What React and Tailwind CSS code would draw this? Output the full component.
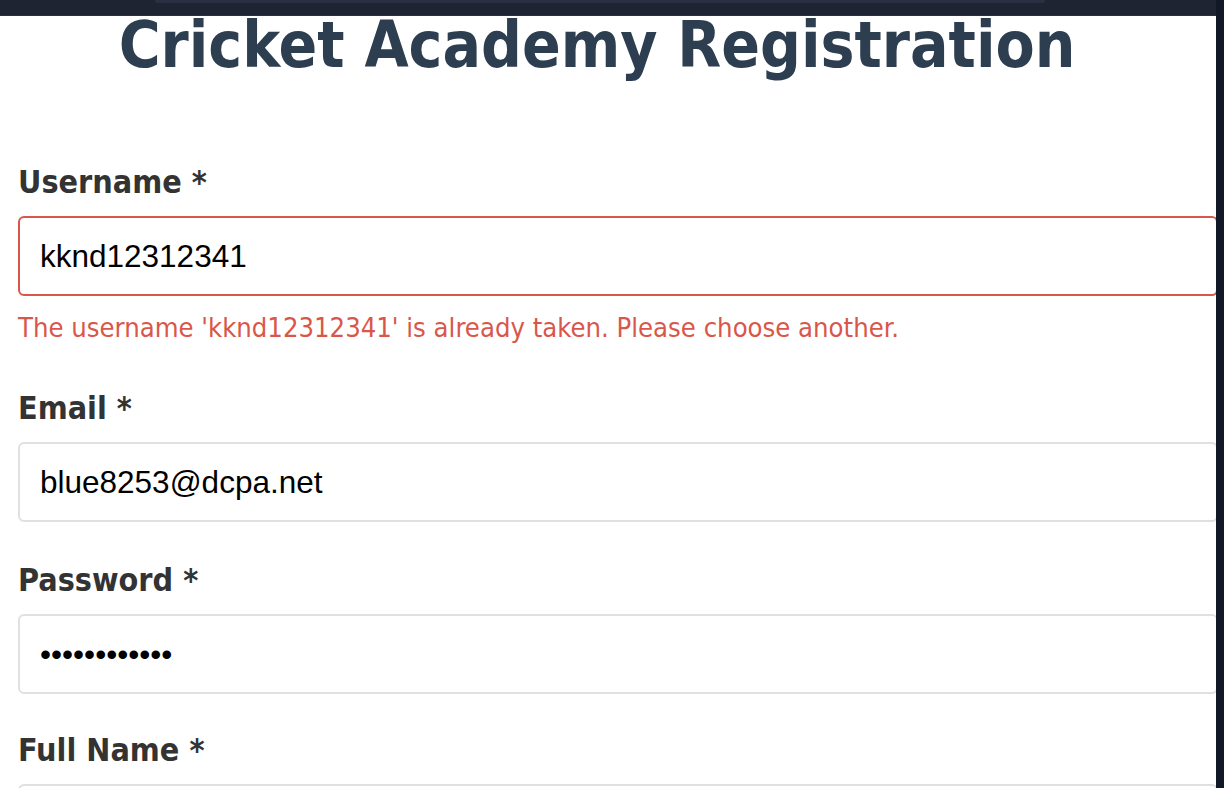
export default function App() {
  const tahoma = { fontFamily: '"DejaVu Sans Condensed", "DejaVu Sans", sans-serif' };
  const arial = { fontFamily: '"Liberation Sans", Arial, sans-serif' };
  const Label = ({ children }) => (
    <div className="text-[32px] leading-[36px] font-bold text-[#333] mb-[16px]" style={tahoma}>
      {children}
    </div>
  );
  const Field = ({ value, type = "text", error }) => (
    <input
      readOnly
      type={type}
      value={value}
      className={`block w-[1200px] h-[80px] px-[20px] rounded-[6px] bg-white text-black text-[31.5px] outline-none border-2 ${
        error ? "border-[#d9574a]" : "border-[#e0e0e0]"
      }`}
      style={arial}
    />
  );
  return (
    <div className="flex w-[1224px] h-[788px] overflow-hidden bg-white">
      <div className="flex flex-col w-[1216px] h-full overflow-hidden">
        <div className="h-[16px] shrink-0 bg-[#1f2433] border-b border-[#2b3041] flex">
          <div className="ml-[155px] w-[890px] h-[3px] bg-[#2a3043] rounded-b-[6px]" />
        </div>
        <div className="pl-[18px] pt-[5px]">
          <h1
            className="text-[63.5px] leading-[48px] font-bold text-[#2c3e50] text-center pr-[40px]"
            style={tahoma}
          >
            Cricket Academy Registration
          </h1>
          <div className="mt-[95px]">
            <Label>Username *</Label>
            <Field value="kknd12312341" error />
            <div
              className="mt-[15px] text-[27.2px] leading-[34px] text-[#d9574a]"
              style={tahoma}
            >
              The username 'kknd12312341' is already taken. Please choose another.
            </div>
          </div>
          <div className="mt-[45px]">
            <Label>Email *</Label>
            <Field value="blue8253@dcpa.net" />
          </div>
          <div className="mt-[40px]">
            <Label>Password *</Label>
            <Field value="passwordpass" type="password" />
          </div>
          <div className="mt-[38px]">
            <Label>Full Name *</Label>
            <Field value="" />
          </div>
        </div>
      </div>
      <div className="w-[8px] h-full bg-[#111827] shrink-0" />
    </div>
  );
}
